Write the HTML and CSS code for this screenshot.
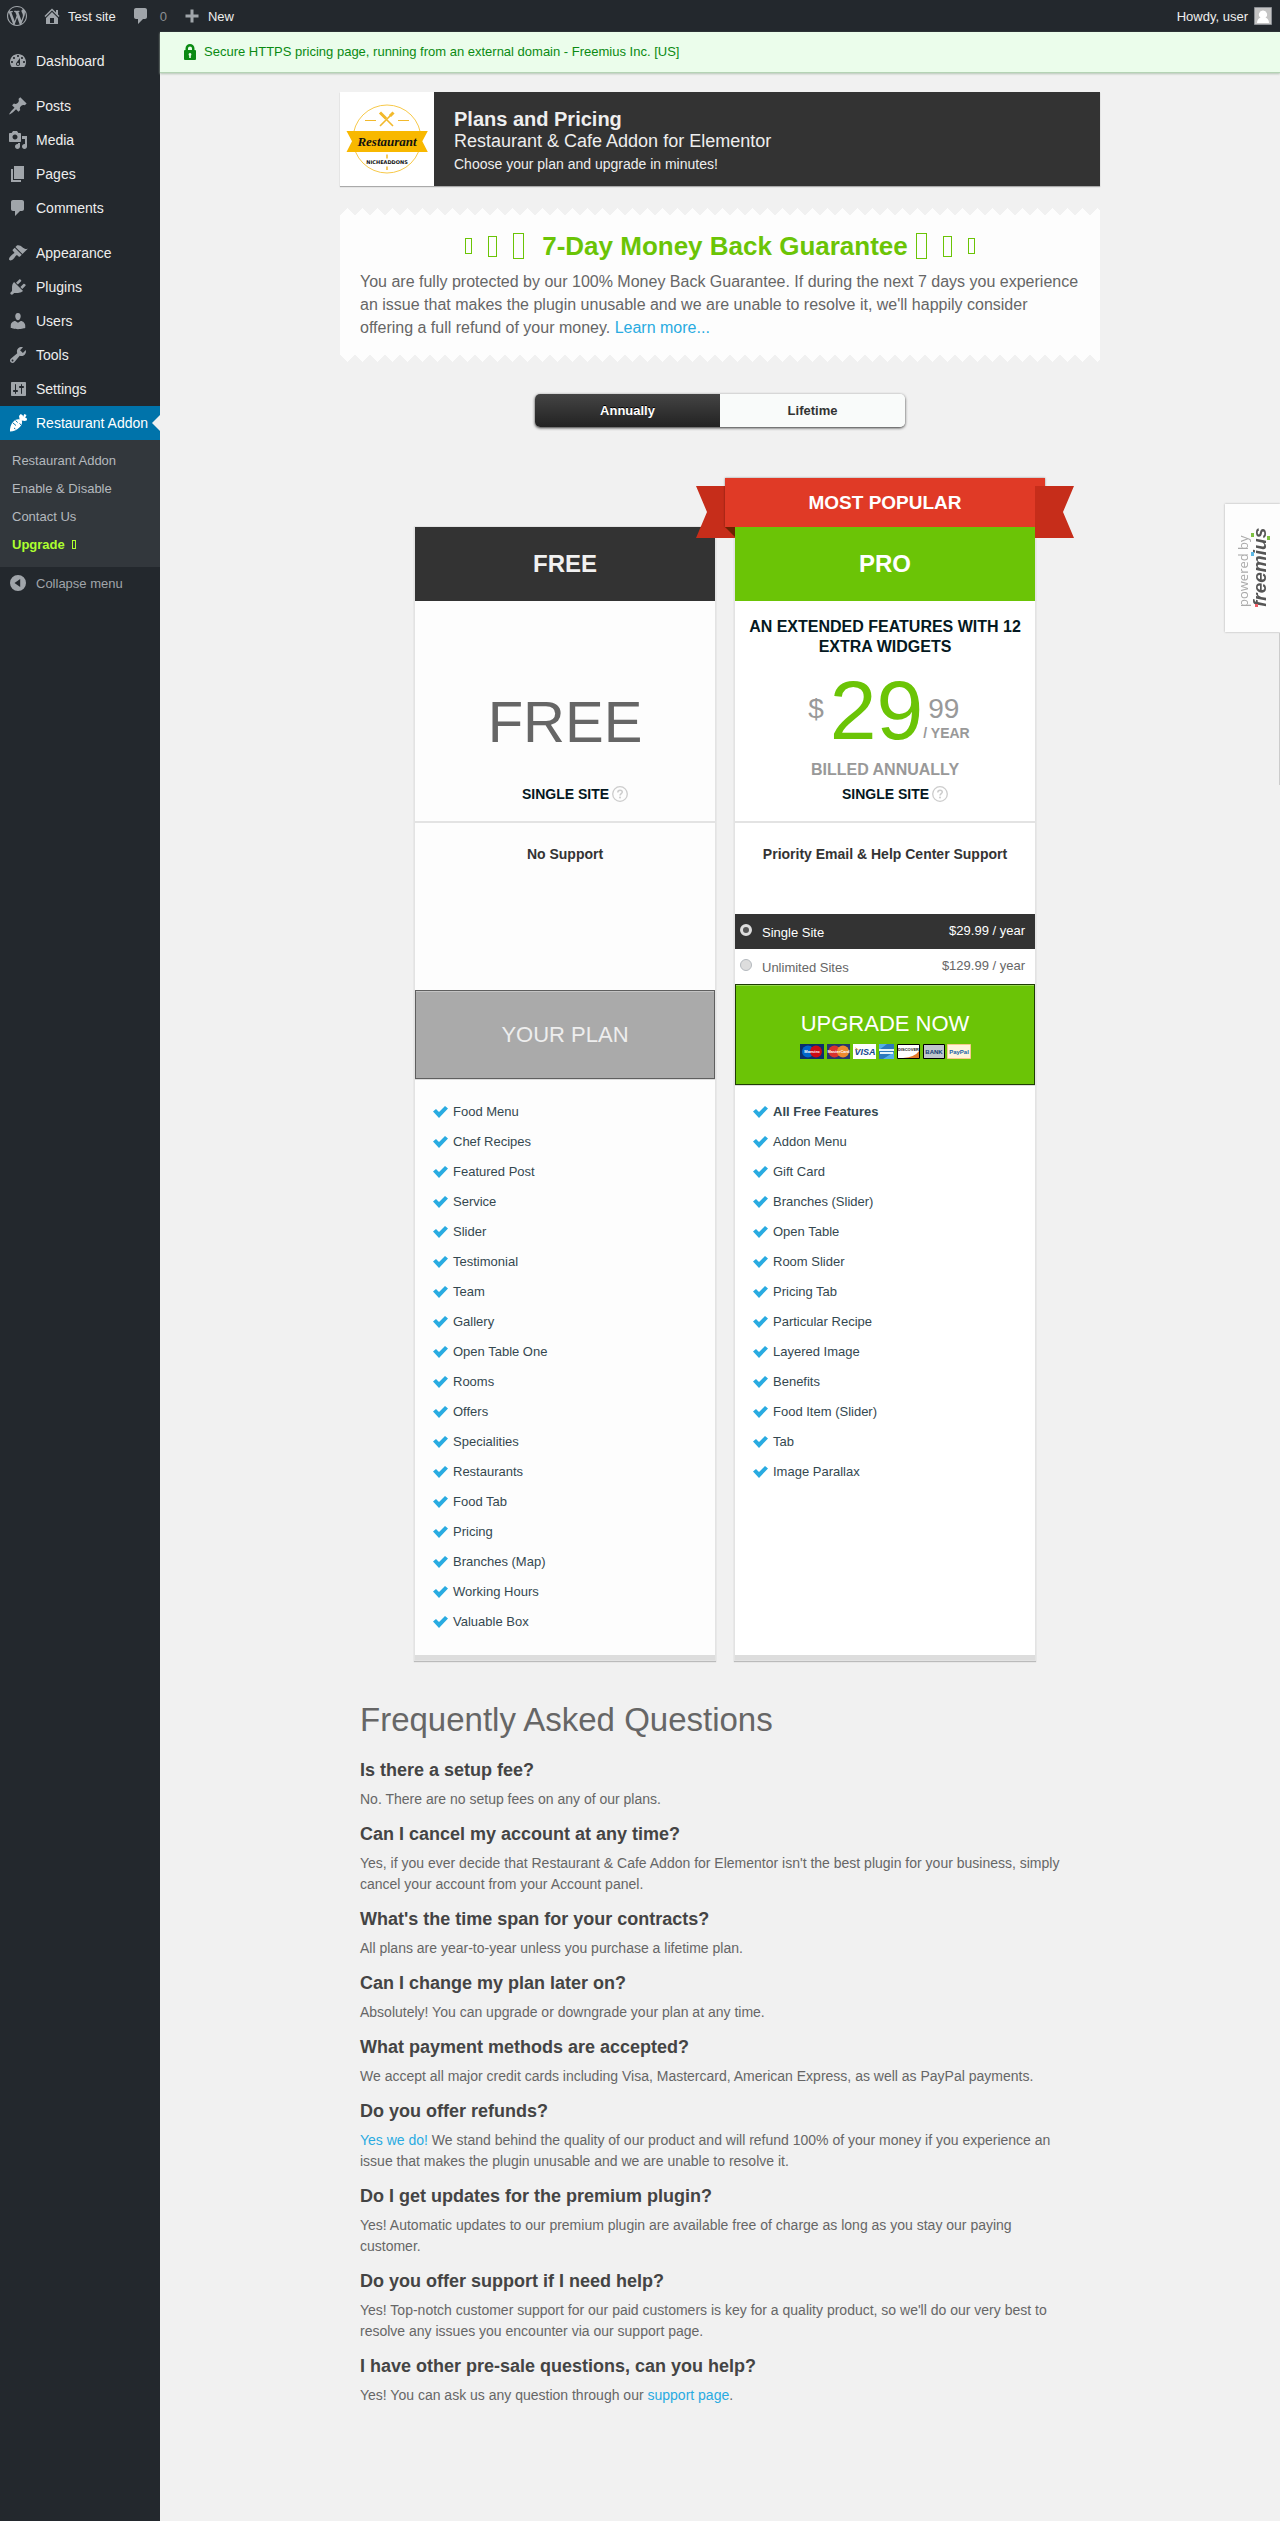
FILE: index.html
```
<!DOCTYPE html>
<html lang="en">
  <head>
    <meta charset="utf-8">
    <title>Plans and Pricing</title>
    <link rel="stylesheet" href="styles.css">
  </head>
<body>

  <svg class="sprite" aria-hidden="true">
    <symbol id="i-wp" viewBox="0 0 20 20"><path d="M20 10c0-5.51-4.49-10-10-10C4.48 0 0 4.49 0 10c0 5.52 4.48 10 10 10 5.51 0 10-4.48 10-10zM7.78 15.37L4.37 6.22c.55-.02 1.17-.08 1.17-.08.5-.06.44-1.13-.06-1.11 0 0-1.45.11-2.37.11-.18 0-.37 0-.58-.01C4.12 2.69 6.87 1.11 10 1.11c2.33 0 4.45.87 6.05 2.34-.68-.11-1.65.39-1.65 1.58 0 .74.45 1.36.9 2.1.35.61.55 1.36.55 2.46 0 1.49-1.4 5-1.4 5l-3.03-8.37c.54-.02.82-.17.82-.17.5-.05.44-1.25-.06-1.22 0 0-1.44.12-2.38.12-.87 0-2.33-.12-2.33-.12-.5-.03-.56 1.2-.06 1.22l.92.08 1.26 3.41zM17.41 10c.24-.64.74-1.87.43-4.25.7 1.29 1.05 2.71 1.05 4.25 0 3.29-1.73 6.24-4.4 7.78.97-2.59 1.94-5.2 2.92-7.78zM6.1 18.09C3.12 16.65 1.11 13.53 1.11 10c0-1.3.23-2.48.72-3.59C3.25 10.3 4.67 14.2 6.1 18.09zm4.03-6.63l2.58 6.98c-.86.29-1.76.45-2.71.45-.79 0-1.57-.11-2.29-.33.81-2.38 1.62-4.74 2.42-7.1z"/></symbol>
    <symbol id="i-home" viewBox="0 0 20 20"><path fill-rule="evenodd" d="M16 8.5l1.53 1.53-1.06 1.06L10 4.6l-6.47 6.47-1.06-1.06L10 2.47l4 4V4h2v4.5zm-6-2.46l6 5.99V18H4v-5.97zM12 17v-5H8v5h4z"/></symbol>
    <symbol id="i-comment" viewBox="0 0 20 20"><path d="M5 2h9c1.1 0 2 .9 2 2v7c0 1.1-.9 2-2 2h-2l-5 5v-5H5c-1.1 0-2-.9-2-2V4c0-1.1.9-2 2-2z"/></symbol>
    <symbol id="i-plus" viewBox="0 0 20 20"><path d="M8.5 3.5h3v5h5v3h-5v5h-3v-5h-5v-3h5z"/></symbol>
    <symbol id="i-dash" viewBox="0 0 20 20"><path fill-rule="evenodd" d="M3.76 16h12.48c1.1-1.37 1.76-3.11 1.76-5 0-4.42-3.58-8-8-8s-8 3.58-8 8c0 1.89.66 3.63 1.76 5zM10 4c.55 0 1 .45 1 1s-.45 1-1 1-1-.45-1-1 .45-1 1-1zM6 6c.55 0 1 .45 1 1s-.45 1-1 1-1-.45-1-1 .45-1 1-1zm8 0c.55 0 1 .45 1 1s-.45 1-1 1-1-.45-1-1 .45-1 1-1zm-5.37 5.55L12 7v6c0 1.1-.9 2-2 2s-2-.9-2-2c0-.57.24-1.08.63-1.45zM4 10c.55 0 1 .45 1 1s-.45 1-1 1-1-.45-1-1 .45-1 1-1zm12 0c.55 0 1 .45 1 1s-.45 1-1 1-1-.45-1-1 .45-1 1-1zm-5 3c0-.55-.45-1-1-1s-1 .45-1 1 .45 1 1 1 1-.45 1-1z"/></symbol>
    <symbol id="i-pin" viewBox="0 0 20 20"><path d="M10.44 3.02l1.82-1.82 6.36 6.35-1.83 1.82c-1.05-.68-2.48-.57-3.41.36l-.75.75c-.92.93-1.04 2.35-.35 3.41l-1.83 1.82-2.41-2.41-2.8 2.79c-.42.42-3.38 2.71-3.8 2.29s1.86-3.39 2.28-3.81l2.79-2.79L4.1 9.36l1.83-1.82c1.05.69 2.48.57 3.4-.36l.75-.75c.93-.92 1.05-2.35.36-3.41z"/></symbol>
    <symbol id="i-media" viewBox="0 0 20 20"><path fill-rule="evenodd" d="M13 11V4c0-.55-.45-1-1-1h-1.67L9 1H5L3.67 3H2c-.55 0-1 .45-1 1v7c0 .55.45 1 1 1h10c.55 0 1-.45 1-1zM7 4.5c1.38 0 2.5 1.12 2.5 2.5S8.38 9.5 7 9.5 4.5 8.38 4.5 7 5.62 4.5 7 4.5zM14 6h5v10.5c0 1.38-1.12 2.5-2.5 2.5S14 17.88 14 16.5s1.12-2.5 2.5-2.5c.17 0 .34.02.5.05V9h-3V6zm-4 8.05V13h2v3.5c0 1.38-1.12 2.5-2.5 2.5S7 17.88 7 16.5 8.12 14 9.5 14c.17 0 .34.02.5.05z"/></symbol>
    <symbol id="i-pages" viewBox="0 0 20 20"><path d="M6 15V2h10v13H6zm-1 1h8v2H3V5h2v11z"/></symbol>
    <symbol id="i-brush" viewBox="0 0 20 20"><path d="M14.48 11.06L7.41 3.99l1.5-1.5c.5-.56 2.3-.47 3.51.32 1.21.8 1.43 1.28 2.91 2.1 1.18.64 2.45 1.26 4.45.85zm-.71.71L6.7 4.7 4.93 6.47c-.39.39-.39 1.02 0 1.41l1.06 1.06c.39.39.39 1.03 0 1.42-.6.6-1.43 1.11-2.21 1.69-.35.26-.7.53-1.01.84C1.43 14.23.4 16.08 1.4 17.07c.99 1 2.84-.03 4.18-1.36.31-.31.58-.66.85-1.02.57-.78 1.08-1.61 1.69-2.21.39-.39 1.02-.39 1.41 0l1.06 1.06c.39.39 1.02.39 1.41 0z"/></symbol>
    <symbol id="i-plug" viewBox="0 0 20 20"><path d="M13.11 4.36L9.87 7.6 8 5.73l3.24-3.24c.35-.34 1.05-.2 1.56.32.52.51.66 1.21.31 1.55zm-8 1.77l.91-1.12 9.01 9.01-1.19.84c-.71.71-2.63 1.16-3.82 1.16H6.14L4.9 17.26c-.59.59-1.54.59-2.12 0-.59-.58-.59-1.53 0-2.12l1.24-1.24v-3.88c0-1.13.4-3.19 1.09-3.89zm7.26 3.97l3.24-3.24c.34-.35 1.04-.21 1.55.31.52.51.66 1.21.31 1.55l-3.24 3.25z"/></symbol>
    <symbol id="i-user" viewBox="0 0 20 20"><path d="M10 9.25c-2.27 0-2.73-3.44-2.73-3.44C7 4.02 7.82 2 9.97 2c2.16 0 2.98 2.02 2.71 3.81 0 0-.41 3.44-2.68 3.44zm0 2.57L12.72 10c2.39 0 4.52 2.33 4.52 4.53v2.49s-3.65 1.13-7.24 1.13c-3.65 0-7.24-1.13-7.24-1.13v-2.49c0-2.25 1.94-4.48 4.47-4.48z"/></symbol>
    <symbol id="i-tools" viewBox="0 0 20 20"><path fill-rule="evenodd" d="M16.68 9.77c-1.34 1.34-3.3 1.67-4.95.99l-5.41 6.52c-.99.99-2.59.99-3.58 0s-.99-2.59 0-3.57l6.52-5.42c-.68-1.65-.35-3.61.99-4.95 1.28-1.28 3.12-1.62 4.72-1.06l-2.89 2.89 2.82 2.82 2.86-2.87c.53 1.58.18 3.39-1.08 4.65zM3.81 16.21c.4.39 1.04.39 1.43 0 .4-.4.4-1.04 0-1.43-.39-.4-1.03-.4-1.43 0-.39.39-.39 1.03 0 1.43z"/></symbol>
    <symbol id="i-settings" viewBox="0 0 20 20"><path fill-rule="evenodd" d="M18 16V4c0-.55-.45-1-1-1H4c-.55 0-1 .45-1 1v12c0 .55.45 1 1 1h13c.55 0 1-.45 1-1zM8 11h1c.55 0 1 .45 1 1s-.45 1-1 1H8v1.5c0 .28-.22.5-.5.5s-.5-.22-.5-.5V13H6c-.55 0-1-.45-1-1s.45-1 1-1h1V5.5c0-.28.22-.5.5-.5s.5.22.5.5V11zm5-2h-1c-.55 0-1-.45-1-1s.45-1 1-1h1V5.5c0-.28.22-.5.5-.5s.5.22.5.5V7h1c.55 0 1 .45 1 1s-.45 1-1 1h-1v5.5c0 .28-.22.5-.5.5s-.5-.22-.5-.5V9z"/></symbol>
    <symbol id="i-carrot" viewBox="0 0 20 20"><path d="M2 18.6c-.3-3 .6-7.300 3.500-10.100 1.700-1.700 3.900-2.600 6.100-2L11 3l1.700-2 2 1.200.4 1.500L16.300.9l2.200 1-1.300 2.900 1.600.5L19 7.200l-2.200.9-3-.6c.8 2.300-.2 4.800-1.900 6.400C9 16.800 5 18.700 2 18.600z"/><path class="cut" d="M7.500 7.500l2.200 2M5 10l3 2.500M11.500 10.500l1.500 1.300M6 15l1.400 1"/></symbol>
    <symbol id="i-collapse" viewBox="0 0 20 20"><path fill-rule="evenodd" d="M10 2a8 8 0 1 0 0 16 8 8 0 0 0 0-16zM12.200 6v8L6.500 10z"/></symbol>
    <symbol id="i-check" viewBox="0 0 15 12"><path d="M0 5.500L3 3l3 3L12 0l3 2.500-9 9.500z"/></symbol>
    <symbol id="i-help" viewBox="0 0 16 16"><circle cx="8" cy="8" r="7.300" fill="none" stroke="#ccc" stroke-width="1.300"/><path d="M5.800 6.400c0-3 4.500-2.900 4.500-.3C10.300 7.700 8 7.700 8 9.600" fill="none" stroke="#ccc" stroke-width="1.500"/><circle cx="8" cy="11.600" r="1" fill="#ccc"/></symbol>
  </svg>

  <header class="adminbar">
    <a href="#" aria-label="About WordPress"><svg class="icon"><use href="#i-wp"/></svg></a>
    <a href="#"><svg class="icon"><use href="#i-home"/></svg>Test site</a>
    <a href="#" class="muted"><svg class="icon"><use href="#i-comment"/></svg>0</a>
    <a href="#"><svg class="icon"><use href="#i-plus"/></svg>New</a>
    <a href="#" class="account">Howdy, user
      <svg class="avatar" viewBox="0 0 18 18"><path fill="#c4c4c4" stroke="#8c8f94" d="M.5.5h17v17H.5z"/><path fill="#fff" d="M9 3.500a4 4 0 0 1 2.500 7.200c2 .6 3.500 2 3.500 5.300H3c0-3.300 1.500-4.700 3.500-5.300A4 4 0 0 1 9 3.500z"/></svg>
    </a>
  </header>

  <div class="wrap">
    <nav class="sidebar">
      <ul class="menu">
        <li><a href="#"><svg class="icon"><use href="#i-dash"/></svg>Dashboard</a></li>
        <li class="sep"><a href="#"><svg class="icon"><use href="#i-pin"/></svg>Posts</a></li>
        <li><a href="#"><svg class="icon"><use href="#i-media"/></svg>Media</a></li>
        <li><a href="#"><svg class="icon"><use href="#i-pages"/></svg>Pages</a></li>
        <li><a href="#"><svg class="icon"><use href="#i-comment"/></svg>Comments</a></li>
        <li class="sep"><a href="#"><svg class="icon"><use href="#i-brush"/></svg>Appearance</a></li>
        <li><a href="#"><svg class="icon"><use href="#i-plug"/></svg>Plugins</a></li>
        <li><a href="#"><svg class="icon"><use href="#i-user"/></svg>Users</a></li>
        <li><a href="#"><svg class="icon"><use href="#i-tools"/></svg>Tools</a></li>
        <li><a href="#"><svg class="icon"><use href="#i-settings"/></svg>Settings</a></li>
        <li class="current"><a href="#"><svg class="icon"><use href="#i-carrot"/></svg>Restaurant Addon</a></li>
      </ul>
      <ul class="submenu">
        <li><a href="#">Restaurant Addon</a></li>
        <li><a href="#">Enable &amp; Disable</a></li>
        <li><a href="#">Contact Us</a></li>
        <li><a href="#" class="upgrade">Upgrade <i class="box tiny"></i></a></li>
      </ul>
      <button class="collapse"><svg class="icon"><use href="#i-collapse"/></svg>Collapse menu</button>
    </nav>

    <main>
      <div class="secure">
        <svg viewBox="0 0 12 16"><path fill-rule="evenodd" d="M1.500 6V4.500a4.500 4.500 0 0 1 9 0V6H11q1 0 1 1v8q0 1-1 1H1q-1 0-1-1V7q0-1 1-1zM4 6h4V4.500a2 2 0 0 0-4 0zM6 9a1.500 1.500 0 0 0-.8 2.700V14h1.600v-2.300A1.500 1.500 0 0 0 6 9z"/></svg>
        Secure HTTPS pricing page, running from an external domain - Freemius Inc. [US]
      </div>

      <div class="content">
        <header class="plugin">
          <svg class="logo" viewBox="0 0 94 94">
            <path fill="#fff" d="M0 0h94v94H0z"/>
            <circle cx="47" cy="47" r="34" fill="none" stroke="#f7c94a"/>
            <path fill="#f8b800" d="M6.500 39h81.300l-5.500 10.300 5.500 10.700H6.500L12 49.300z"/>
            <g stroke="#f2b92c" fill="none"><path d="M25 28.500h11M58 28.500h11"/><path stroke-width="1.600" d="M40 21l13 13M53 21L40 34"/><path stroke-width="3" d="M40 20.500l6 6M50 24l3.500-3.500"/><path stroke-width="1.500" d="M47 62.500v4M47 74.500v3.500"/></g>
            <text class="script" x="47" y="54">Restaurant</text>
            <text class="brand" x="47" y="72">NICHEADDONS</text>
          </svg>
          <div class="title">
            <h1>Plans and Pricing</h1>
            <h2>Restaurant &amp; Cafe Addon for Elementor</h2>
            <p>Choose your plan and upgrade in minutes!</p>
          </div>
        </header>

        <section class="guarantee">
          <h2>
            <span class="boxes"><i class="box s"></i><i class="box m"></i><i class="box l"></i></span>
            7-Day Money Back Guarantee
            <span class="boxes"><i class="box l"></i><i class="box m"></i><i class="box s"></i></span>
          </h2>
          <p>You are fully protected by our 100% Money Back Guarantee. If during the next 7 days you experience an issue that makes the plugin unusable and we are unable to resolve it, we'll happily consider offering a full refund of your money. <a href="#">Learn more...</a></p>
        </section>

        <div class="cycles">
          <button class="active">Annually</button>
          <button>Lifetime</button>
        </div>

        <div class="plans">
          <section class="plan free">
            <h2>Free</h2>
            <div class="price">
              <div class="amount">Free</div>
              <div class="site">Single Site <svg><use href="#i-help"/></svg></div>
            </div>
            <div class="support">No Support</div>
            <button class="cta" disabled>Your Plan</button>
            <ul class="features">
              <li><svg><use href="#i-check"/></svg>Food Menu</li>
              <li><svg><use href="#i-check"/></svg>Chef Recipes</li>
              <li><svg><use href="#i-check"/></svg>Featured Post</li>
              <li><svg><use href="#i-check"/></svg>Service</li>
              <li><svg><use href="#i-check"/></svg>Slider</li>
              <li><svg><use href="#i-check"/></svg>Testimonial</li>
              <li><svg><use href="#i-check"/></svg>Team</li>
              <li><svg><use href="#i-check"/></svg>Gallery</li>
              <li><svg><use href="#i-check"/></svg>Open Table One</li>
              <li><svg><use href="#i-check"/></svg>Rooms</li>
              <li><svg><use href="#i-check"/></svg>Offers</li>
              <li><svg><use href="#i-check"/></svg>Specialities</li>
              <li><svg><use href="#i-check"/></svg>Restaurants</li>
              <li><svg><use href="#i-check"/></svg>Food Tab</li>
              <li><svg><use href="#i-check"/></svg>Pricing</li>
              <li><svg><use href="#i-check"/></svg>Branches (Map)</li>
              <li><svg><use href="#i-check"/></svg>Working Hours</li>
              <li><svg><use href="#i-check"/></svg>Valuable Box</li>
            </ul>
          </section>

          <section class="plan pro">
            <div class="ribbon"><span>Most Popular</span></div>
            <h2>Pro</h2>
            <div class="price">
              <p class="desc">An extended features with 12 extra widgets</p>
              <div class="amount">
                <span class="small">$</span>
                <span class="whole">29</span>
                <span class="side"><span class="small">99</span><span class="per">/ Year</span></span>
              </div>
              <div class="billed">Billed Annually</div>
              <div class="site">Single Site <svg><use href="#i-help"/></svg></div>
            </div>
            <div class="support">Priority Email &amp; Help Center Support</div>
            <div class="licenses">
              <label><input type="radio" name="license" checked><span>Single Site</span><b>$29.99 / year</b></label>
              <label><input type="radio" name="license"><span>Unlimited Sites</span><b>$129.99 / year</b></label>
            </div>
            <button class="cta">Upgrade Now
              <svg class="cards" viewBox="0 0 171 15">
                <path fill="#0a2f6b" d="M0 0h24v15H0z"/><circle cx="8" cy="7.500" r="6" fill="#0066cb"/><circle cx="16" cy="7.500" r="6" fill="#cc0a14"/><text x="12" y="9" fill="#fff">Maestro</text>
                <path fill="#26386b" d="M27 0h23v15H27z"/><circle cx="34.500" cy="7.500" r="6" fill="#d9322e"/><circle cx="43" cy="7.500" r="6" fill="#ee8b2f"/><text x="38.500" y="9" fill="#fff">MasterCard</text>
                <path fill="#fff" d="M53 0h23v15H53z"/><text class="visa" x="65" y="11" fill="#15488f">VISA</text><path stroke="#f2a331" d="M55.500 4l3 2"/>
                <path fill="#2c79bd" d="M79 0h15v15H79z"/><path fill="#54aee8" d="M79 0h8l-8 6zM94 8v7H83z"/><path fill="#e5f4fc" d="M79 5h15v2H79zM80 8h13v2H80z"/>
                <path fill="#fff" stroke="#000" d="M97.500.5h22v14h-22z"/><path fill="#e27b2d" d="M119 7v7h-16q12-1 16-7z"/><text x="108.500" y="7" fill="#222">DISCOVER</text>
                <path fill="#bfc6cc" stroke="#000" d="M123.500.5h21v14h-21z"/><text class="bank" x="134" y="10" fill="#143d73">BANK</text>
                <path fill="#fff5dc" stroke="#f6cb8c" d="M147.500.5h23v14h-23z"/><text class="bank" x="159" y="10" fill="#1a63a7">PayPal</text>
              </svg>
            </button>
            <ul class="features">
              <li><svg><use href="#i-check"/></svg><strong>All Free Features</strong></li>
              <li><svg><use href="#i-check"/></svg>Addon Menu</li>
              <li><svg><use href="#i-check"/></svg>Gift Card</li>
              <li><svg><use href="#i-check"/></svg>Branches (Slider)</li>
              <li><svg><use href="#i-check"/></svg>Open Table</li>
              <li><svg><use href="#i-check"/></svg>Room Slider</li>
              <li><svg><use href="#i-check"/></svg>Pricing Tab</li>
              <li><svg><use href="#i-check"/></svg>Particular Recipe</li>
              <li><svg><use href="#i-check"/></svg>Layered Image</li>
              <li><svg><use href="#i-check"/></svg>Benefits</li>
              <li><svg><use href="#i-check"/></svg>Food Item (Slider)</li>
              <li><svg><use href="#i-check"/></svg>Tab</li>
              <li><svg><use href="#i-check"/></svg>Image Parallax</li>
            </ul>
          </section>
        </div>

        <section class="faq">
          <h2>Frequently Asked Questions</h2>
          <h3>Is there a setup fee?</h3>
          <p>No. There are no setup fees on any of our plans.</p>
          <h3>Can I cancel my account at any time?</h3>
          <p>Yes, if you ever decide that Restaurant &amp; Cafe Addon for Elementor isn't the best plugin for your business, simply cancel your account from your Account panel.</p>
          <h3>What's the time span for your contracts?</h3>
          <p>All plans are year-to-year unless you purchase a lifetime plan.</p>
          <h3>Can I change my plan later on?</h3>
          <p>Absolutely! You can upgrade or downgrade your plan at any time.</p>
          <h3>What payment methods are accepted?</h3>
          <p>We accept all major credit cards including Visa, Mastercard, American Express, as well as PayPal payments.</p>
          <h3>Do you offer refunds?</h3>
          <p><a href="#">Yes we do!</a> We stand behind the quality of our product and will refund 100% of your money if you experience an issue that makes the plugin unusable and we are unable to resolve it.</p>
          <h3>Do I get updates for the premium plugin?</h3>
          <p>Yes! Automatic updates to our premium plugin are available free of charge as long as you stay our paying customer.</p>
          <h3>Do you offer support if I need help?</h3>
          <p>Yes! Top-notch customer support for our paid customers is key for a quality product, so we'll do our very best to resolve any issues you encounter via our support page.</p>
          <h3>I have other pre-sale questions, can you help?</h3>
          <p>Yes! You can ask us any question through our <a href="#">support page</a>.</p>
        </section>
      </div>
    </main>
  </div>

  <a href="#" class="powered">
    <span>powered by</span>
    <strong>freemius</strong>
    <svg viewBox="0 0 20 78"><path fill="#7dc142" d="M1 4h3v4H1zM17 7h3v4h-3z"/><path fill="#5cb9e6" d="M1 23h3v4H1z"/><path fill="#ef5c65" d="M5 75h3v3H5z"/></svg>
  </a>
  <div class="drawer-edge"></div>

</body>
</html>
```
FILE: styles.css
```
* { box-sizing: border-box; }

body {
  margin: 0;
  display: flex;
  flex-direction: column;
  min-height: 100vh;
  background: #f1f1f1;
  color: #666;
  font: 14px/21px "Liberation Sans", Arial, sans-serif;
}

h1, h2, h3, p, ul { margin: 0; padding: 0; }
ul { list-style: none; }
a { color: #29abe1; text-decoration: none; }
button { font-family: inherit; border: 0; padding: 0; cursor: pointer; }
.sprite { display: none; }
.icon { width: 20px; height: 20px; fill: #a0a5aa; flex: none; }

/* top bar */
.adminbar {
  display: flex;
  height: 32px;
  padding: 0 8px 0 7px;
  background: #23282d;
}
.adminbar a {
  display: flex;
  align-items: center;
  gap: 6px;
  margin-right: 15px;
  color: #eee;
  font-size: 13px;
}
.adminbar a.muted { color: #8b8f93; gap: 9px; }
.adminbar a.account { margin: 0 0 0 auto; }
.avatar { width: 18px; height: 18px; }

.wrap { display: flex; flex: 1; }

/* left menu */
.sidebar { width: 160px; flex: none; padding-top: 12px; background: #23282d; }
.menu a {
  display: flex;
  align-items: center;
  gap: 8px;
  height: 34px;
  padding-left: 8px;
  color: #eee;
  white-space: nowrap;
}
.menu .sep { margin-top: 11px; }
.menu .current { position: relative; background: #0073aa; }
.menu .current a { color: #fff; }
.menu .current .icon { fill: #fff; }
.cut { stroke: #0073aa; fill: none; }
.menu .current::after {
  content: "";
  position: absolute;
  right: 0;
  top: 9px;
  border: 8px solid transparent;
  border-left: 0;
  border-right-color: #f1f1f1;
}
.submenu { padding: 7px 0 8px; background: #32373c; }
.submenu a {
  display: block;
  padding-left: 12px;
  color: #b4b9be;
  font-size: 13px;
  line-height: 28px;
}
.submenu a.upgrade { color: #adff2f; font-weight: bold; }
.collapse {
  display: flex;
  align-items: center;
  gap: 8px;
  width: 100%;
  height: 32px;
  padding-left: 8px;
  background: none;
  color: #a0a5aa;
  font-size: 13px;
}

/* outlined placeholder glyphs */
.box { display: inline-block; border: 1px solid; }
.box.tiny { width: 4px; height: 9px; margin-left: 4px; }
.box.s { width: 7px; height: 16px; }
.box.m { width: 9px; height: 21px; }
.box.l { width: 11px; height: 26px; }

main { flex: 1; min-width: 0; }
.secure {
  display: flex;
  gap: 8px;
  height: 41px;
  padding: 9px 24px;
  border-bottom: 1px solid #b5d3b5;
  box-shadow: 0 1px 2px #b5c5b5;
  background: #ebfdeb;
  color: #0a8a12;
  font-size: 13px;
}
.secure svg { width: 12px; height: 16px; margin-top: 3px; fill: currentColor; }

.content { max-width: 760px; margin: 19px auto 0; }

.plugin {
  display: flex;
  background: #333;
  color: #eee;
  box-shadow: 0 1px 1px #aaa;
}
.logo { width: 94px; height: 94px; }
.logo text { text-anchor: middle; fill: #111; }
.script { font: italic bold 13px "Liberation Serif", serif; }
.brand { font: bold 5px "DejaVu Sans", sans-serif; }
.title { padding: 15px 20px 9px; }
.title h1 { font-size: 20px; line-height: 24px; }
.title h2 { font-size: 18px; line-height: 20px; font-weight: normal; }
.title p { line-height: 26px; }

.guarantee {
  position: relative;
  margin-top: 30px;
  padding: 15px 20px;
  background: #fdfdfd;
}
.guarantee::before, .guarantee::after {
  content: "";
  position: absolute;
  left: 0;
  right: 0;
  height: 8px;
  background-size: 15px 8px;
}
.guarantee::before {
  bottom: 100%;
  background-image: conic-gradient(from 135deg at top, #fdfdfd 90deg, transparent 0);
}
.guarantee::after {
  top: 100%;
  background-image: conic-gradient(from -45deg at bottom, #fdfdfd 90deg, transparent 0);
}
.guarantee h2 {
  display: flex;
  align-items: center;
  justify-content: center;
  gap: 8px;
  margin-bottom: 9px;
  color: #6bc406;
  font-size: 26px;
  line-height: 30px;
}
.guarantee p { font-size: 16px; line-height: 23px; }
.boxes { display: flex; align-items: center; gap: 16px; }
.boxes:first-child { margin-right: 10px; }

.cycles {
  display: flex;
  width: 370px;
  margin: 40px auto 0;
  border-radius: 5px;
  box-shadow: 0 1px 3px #333;
  overflow: hidden;
}
.cycles button {
  flex: 1;
  height: 33px;
  background: #f9fbfa;
  color: #333;
  font-size: 13px;
  font-weight: bold;
}
.cycles button.active {
  background: linear-gradient(#444, #222);
  color: #fff;
  text-shadow: 0 -1px #000;
}

/* plans */
.plans {
  display: flex;
  justify-content: center;
  gap: 20px;
  margin-top: 100px;
  padding-left: 10px;
}
.plan {
  position: relative;
  width: 300px;
  background: #fdfdfd;
  border-bottom: 5px solid #ddd;
  box-shadow: 0 0 0 1px #e3e3e3, 0 1px 1px 1px #bbb;
  text-align: center;
}
.plan.pro { background: #fff; }
.plan > h2 {
  height: 74px;
  background: #333;
  color: #f1f1f1;
  font-size: 24px;
  line-height: 74px;
  text-transform: uppercase;
}
.plan.pro > h2 { position: relative; background: #6bc406; color: #fff; }

.ribbon {
  position: absolute;
  top: -49px;
  left: -10px;
  right: -10px;
  height: 49px;
  color: #fff;
  font-size: 19px;
  font-weight: bold;
  line-height: 49px;
  text-transform: uppercase;
}
.ribbon span {
  display: block;
  position: relative;
  background: #e03a26;
  box-shadow: 0 0 2px rgba(0, 0, 0, .4);
}
.ribbon span::before, .ribbon span::after {
  content: "";
  position: absolute;
  top: 49px;
  border-top: 10px solid #6b2200;
}
.ribbon span::before { left: 0; border-left: 10px solid transparent; }
.ribbon span::after { right: 0; border-right: 10px solid transparent; }
.ribbon::before, .ribbon::after {
  content: "";
  position: absolute;
  top: 8px;
  width: 39px;
  height: 52px;
  background: #c62d1a;
}
.ribbon::before { left: -29px; clip-path: polygon(0 0, 100% 0, 100% 100%, 0 100%, 11px 50%); }
.ribbon::after { right: -29px; clip-path: polygon(0 0, 100% 0, 28px 50%, 100% 100%, 0 100%); }

.price {
  display: flex;
  flex-direction: column;
  justify-content: flex-end;
  height: 222px;
  padding-bottom: 15px;
  border-bottom: 2px solid #e3e3e3;
  text-transform: uppercase;
}
.desc { padding: 0 10px; margin-bottom: 13px; color: #041821; font-size: 16px; font-weight: bold; line-height: 20px; }
.amount { height: 80px; font-size: 58px; line-height: 80px; }
.free .amount { margin-bottom: 20px; }
.pro .amount { display: flex; justify-content: center; padding-left: 8px; color: #999; }
.pro .whole { margin-left: 6px; color: #6bc406; font-size: 84px; }
.small { padding-top: 25px; font-size: 28px; line-height: 28px; }
.side { display: flex; flex-direction: column; text-align: left; }
.side .small { padding-left: 5px; }
.per { font-size: 14px; font-weight: bold; line-height: 20px; }
.billed { margin-top: 8px; color: #999; font-size: 16px; font-weight: bold; line-height: 24px; }
.site {
  display: flex;
  align-items: center;
  justify-content: center;
  gap: 3px;
  padding-left: 20px;
  color: #041821;
  font-weight: bold;
  line-height: 24px;
}
.site svg { width: 16px; height: 16px; }

.support { height: 91px; padding-top: 21px; color: #333; font-weight: bold; line-height: 20px; }
.free .support { height: 167px; }

.licenses label {
  display: flex;
  height: 35px;
  padding: 0 10px 0 5px;
  font-size: 13px;
  line-height: 33px;
}
.licenses span { margin-left: 10px; padding-top: 2px; }
.licenses b { margin-left: auto; font-weight: normal; }
.licenses label:has(:checked) { background: #333; color: #fff; }
.licenses input {
  appearance: none;
  width: 12px;
  height: 12px;
  margin: 10px 0 0;
  border: 1px solid #b4b9be;
  border-radius: 50%;
  background: #ddd;
}
.licenses input:checked { border: 3px solid #ddd; background: #555; }

.cta {
  display: block;
  width: 100%;
  height: 101px;
  border: 1px solid #1f3d04;
  box-shadow: inset 0 1px #97d64f, 0 1px #ddd;
  background: #6bc406;
  color: #fff;
  font-size: 22px;
  line-height: 26px;
  text-transform: uppercase;
}
.cta:disabled {
  height: 89px;
  border-color: #5f5f5f;
  box-shadow: inset 0 1px #c4c4c4, 0 1px #ddd;
  background: #aaa;
  color: #eee;
}
.cards { display: block; width: 171px; height: 15px; margin: 7px auto 0; text-transform: none; }
.cards text { font: bold 4px "Liberation Sans", sans-serif; text-anchor: middle; }
.cards .visa { font-size: 9px; font-style: italic; }
.cards .bank { font-size: 6px; }

.features { padding: 12px 18px 18px; }
.free .features { padding-top: 18px; }
.features li {
  display: flex;
  align-items: center;
  gap: 5px;
  color: #344850;
  font-size: 13px;
  line-height: 30px;
}
.features svg { width: 15px; height: 12px; fill: #29abe1; }

.faq { padding: 40px 36px 0 20px; }
.faq h2 { margin-bottom: 18px; font-size: 33px; font-weight: normal; line-height: 40px; }
.faq h3 { margin-bottom: 7px; color: #444; font-size: 18px; line-height: 24px; }
.faq p { margin-bottom: 12px; }

/* badge on the right edge */
.powered {
  position: fixed;
  top: 504px;
  right: 0;
  width: 55px;
  height: 128px;
  padding: 25px 0 0 10px;
  display: flex;
  background: #fdfdfd;
  box-shadow: 0 0 2px #aaa;
  color: #aaa;
}
.powered span, .powered strong { writing-mode: vertical-rl; transform: rotate(180deg); height: 78px; }
.powered span { font: 13px/16px "Open Sans", sans-serif; }
.powered strong { color: #555; font: italic bold 19px/18px "Liberation Sans", sans-serif; }
.powered svg { position: absolute; top: 25px; left: 25px; width: 20px; height: 78px; }
.drawer-edge { position: fixed; top: 633px; right: 0; width: 1px; height: 152px; background: #ccc; }
```
